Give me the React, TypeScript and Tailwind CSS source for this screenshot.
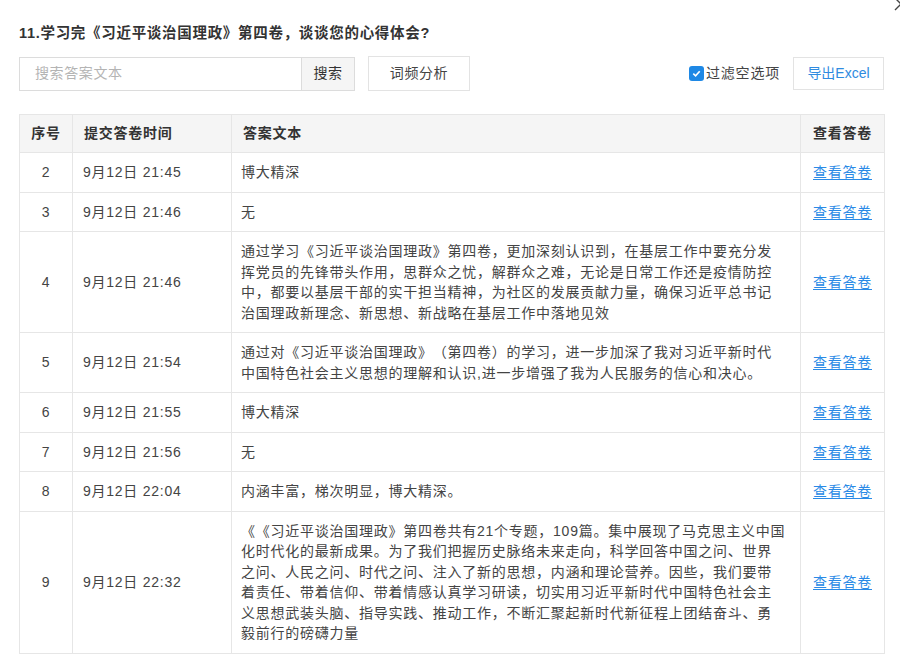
import React from 'react';

const rows: { no: number; time: string; lines: string[] }[] = [
  { no: 2, time: '9月12日 21:45', lines: ['博大精深'] },
  { no: 3, time: '9月12日 21:46', lines: ['无'] },
  {
    no: 4,
    time: '9月12日 21:46',
    lines: [
      '通过学习《习近平谈治国理政》第四卷，更加深刻认识到，在基层工作中要充分发',
      '挥党员的先锋带头作用，思群众之忧，解群众之难，无论是日常工作还是疫情防控',
      '中，都要以基层干部的实干担当精神，为社区的发展贡献力量，确保习近平总书记',
      '治国理政新理念、新思想、新战略在基层工作中落地见效',
    ],
  },
  {
    no: 5,
    time: '9月12日 21:54',
    lines: [
      '通过对《习近平谈治国理政》（第四卷）的学习，进一步加深了我对习近平新时代',
      '中国特色社会主义思想的理解和认识,进一步增强了我为人民服务的信心和决心。',
    ],
  },
  { no: 6, time: '9月12日 21:55', lines: ['博大精深'] },
  { no: 7, time: '9月12日 21:56', lines: ['无'] },
  { no: 8, time: '9月12日 22:04', lines: ['内涵丰富，梯次明显，博大精深。'] },
  {
    no: 9,
    time: '9月12日 22:32',
    lines: [
      '《《习近平谈治国理政》第四卷共有21个专题，109篇。集中展现了马克思主义中国',
      '化时代化的最新成果。为了我们把握历史脉络未来走向，科学回答中国之问、世界',
      '之问、人民之问、时代之问、注入了新的思想，内涵和理论营养。因些，我们要带',
      '着责任、带着信仰、带着情感认真学习研读，切实用习近平新时代中国特色社会主',
      '义思想武装头脑、指导实践、推动工作，不断汇聚起新时代新征程上团结奋斗、勇',
      '毅前行的磅礴力量',
    ],
  },
];

const font = { fontFamily: '"Liberation Sans", "Noto Sans CJK SC", sans-serif' };

export default function App() {
  return (
    <div
      className="relative h-[655px] w-[900px] overflow-hidden bg-white [text-spacing-trim:space-all]"
      style={font}
    >
      <svg className="absolute left-[893px] top-[-4px]" width="16" height="16" viewBox="0 0 16 16">
        <path d="M2 2 L14 14 M14 2 L2 14" stroke="#444" strokeWidth="1.4" fill="none" />
      </svg>

      <div className="pl-[19px] pr-[16px] pt-[23px]">
        <h2 className="text-[14.5px] font-bold leading-[20px] tracking-[0.7px] text-[#333]">
          11.学习完《习近平谈治国理政》第四卷，谈谈您的心得体会?
        </h2>

        <div className="mt-[13px] flex items-center">
          <div className="flex h-[34px] w-[336px] border border-[#dcdcdc]">
            <div className="flex flex-1 items-center pl-[15px] text-[14px] tracking-[0.6px] text-[#b4b4b4]">搜索答案文本</div>
            <div className="flex w-[53px] items-center justify-center border-l border-[#dcdcdc] bg-[#f5f5f5] text-[14px] tracking-[0.6px] text-[#333]">
              搜索
            </div>
          </div>
          <div className="ml-[13px] flex h-[35px] w-[102px] items-center justify-center border border-[#e3e3e3] text-[14px] tracking-[0.6px] text-[#444]">
            词频分析
          </div>

          <div className="ml-auto flex items-center">
            <span className="flex h-[15px] w-[15px] items-center justify-center rounded-[3px] bg-[#1e88e5]">
              <svg width="11" height="11" viewBox="0 0 12 12">
                <path d="M2.5 6.2 L5 8.5 L9.5 3.5" stroke="#fff" strokeWidth="1.8" fill="none" />
              </svg>
            </span>
            <span className="ml-[2px] text-[14px] tracking-[0.8px] text-[#444]">过滤空选项</span>
            <div className="ml-[13px] flex h-[33px] w-[91px] items-center justify-center border border-[#e3e3e3] text-[14px] text-[#2f8be0]">
              导出Excel
            </div>
          </div>
        </div>

        <table className="mt-[23px] w-[865px] table-fixed border-collapse border border-[#e6e6e6] text-[14px] leading-[20.5px] tracking-[0.75px]">
          <colgroup>
            <col className="w-[53px]" />
            <col className="w-[159px]" />
            <col className="w-[569px]" />
            <col className="w-[84px]" />
          </colgroup>
          <thead>
            <tr className="h-[38px] bg-[#f5f5f5] font-bold text-[#333]">
              <th className="border border-[#e6e6e6] text-center font-bold">序号</th>
              <th className="border border-[#e6e6e6] pl-[11px] text-left font-bold">提交答卷时间</th>
              <th className="border border-[#e6e6e6] pl-[11px] text-left font-bold">答案文本</th>
              <th className="border border-[#e6e6e6] text-center font-bold">查看答卷</th>
            </tr>
          </thead>
          <tbody className="text-[#444]">
            {rows.map((r) => (
              <tr key={r.no}>
                <td className="border border-[#e6e6e6] py-[9px] text-center">{r.no}</td>
                <td className="border border-[#e6e6e6] py-[9px] pl-[10px]">{r.time}</td>
                <td className="border border-[#e6e6e6] py-[9px] pl-[9px] pr-[9px]">
                  {r.lines.map((l, i) => (
                    <span key={i} className="block whitespace-nowrap">
                      {l}
                    </span>
                  ))}
                </td>
                <td className="border border-[#e6e6e6] py-[9px] text-center">
                  <a className="text-[#2a8ae6] underline underline-offset-2">查看答卷</a>
                </td>
              </tr>
            ))}
          </tbody>
        </table>
      </div>
    </div>
  );
}
